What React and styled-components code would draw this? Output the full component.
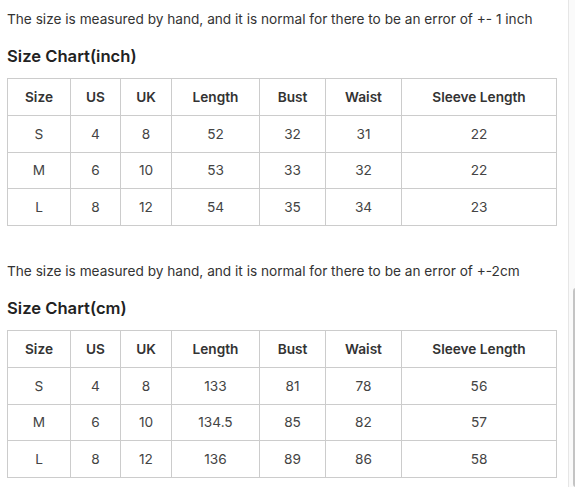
import React from "react";
import styled, { createGlobalStyle } from "styled-components";

const Global = createGlobalStyle`
  html, body { margin: 0; padding: 0; background: #ffffff; }
  body { font-family: Inter, "Noto Sans", sans-serif; color: #333; }
`;

const Page = styled.div`
  display: flex;
  width: 575px;
  height: 487px;
  overflow: hidden;
`;

const Content = styled.main`
  width: 568px;
  flex: none;
  padding: 9px 0 0 7px;
  box-sizing: border-box;
  display: flex;
  flex-direction: column;
  gap: 35px;
`;

const Track = styled.div`
  flex: 1;
  border-left: 1px solid #e6e6e6;
  background: #fafafa;
  display: flex;
  flex-direction: column;
  padding-left: 4px;
`;

const Thumb = styled.div`
  margin-top: 288px;
  flex: 1;
  width: 6px;
  border-radius: 3px;
  background: #c4c4c4;
`;

const Section = styled.section`
  display: flex;
  flex-direction: column;
`;

const Note = styled.p`
  margin: 0;
  font-size: 13.65px;
  line-height: 20px;
  color: #333;
`;

const Heading = styled.h2`
  margin: ${(p) => p.$top}px 0 10px;
  font-size: 16.6px;
  line-height: 24px;
  font-weight: 600;
  color: #222;
`;

const Table = styled.table`
  width: 549px;
  border-collapse: collapse;
  table-layout: fixed;
  font-size: 13.65px;
`;

const Th = styled.th`
  border: 1px solid #cccccc;
  height: 35.75px;
  padding: 0;
  font-weight: 600;
  color: #333;
  text-align: center;
  vertical-align: middle;
`;

const Td = styled.td`
  border: 1px solid #cccccc;
  height: 35.75px;
  padding: 0;
  font-weight: 400;
  color: #444;
  text-align: center;
  vertical-align: middle;
`;

const widths = [63, 50, 51, 88, 66, 76, 155];
const headers = ["Size", "US", "UK", "Length", "Bust", "Waist", "Sleeve Length"];

const SizeTable = ({ rows }) => (
  <Table>
    <colgroup>
      {widths.map((w, i) => (
        <col key={i} style={{ width: w }} />
      ))}
    </colgroup>
    <thead>
      <tr>
        {headers.map((h) => (
          <Th key={h}>{h}</Th>
        ))}
      </tr>
    </thead>
    <tbody>
      {rows.map((r) => (
        <tr key={r[0]}>
          {r.map((c, i) => (
            <Td key={i}>{c}</Td>
          ))}
        </tr>
      ))}
    </tbody>
  </Table>
);

const inchRows = [
  ["S", "4", "8", "52", "32", "31", "22"],
  ["M", "6", "10", "53", "33", "32", "22"],
  ["L", "8", "12", "54", "35", "34", "23"],
];

const cmRows = [
  ["S", "4", "8", "133", "81", "78", "56"],
  ["M", "6", "10", "134.5", "85", "82", "57"],
  ["L", "8", "12", "136", "89", "86", "58"],
];

export default function App() {
  return (
    <>
      <Global />
      <Page>
        <Content>
          <Section>
            <Note>The size is measured by hand, and it is normal for there to be an error of +- 1 inch</Note>
            <Heading $top={15}>Size Chart(inch)</Heading>
            <SizeTable rows={inchRows} />
          </Section>
          <Section>
            <Note>The size is measured by hand, and it is normal for there to be an error of +-2cm</Note>
            <Heading $top={15}>Size Chart(cm)</Heading>
            <SizeTable rows={cmRows} />
          </Section>
        </Content>
        <Track>
          <Thumb />
        </Track>
      </Page>
    </>
  );
}
